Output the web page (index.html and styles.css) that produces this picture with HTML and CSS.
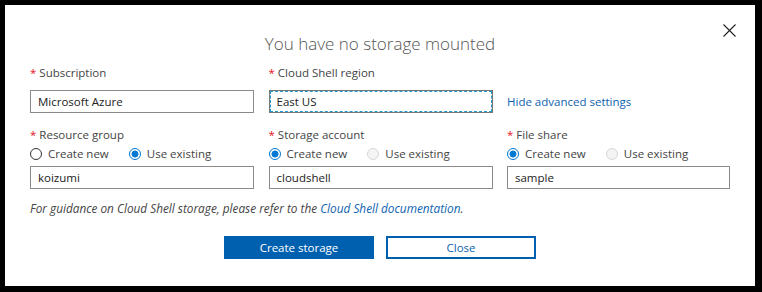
FILE: index.html
```html
<!DOCTYPE html>
<html lang="en">
<head>
    <meta charset="UTF-8">
    <meta name="viewport" content="width=device-width, initial-scale=1.0">
    <title>Cloud Shell storage</title>
    <link rel="stylesheet" href="styles.css">
</head>
<body>

    <div class="dialog">
        <!-- Close icon -->
        <button type="button" class="close-btn" aria-label="Close">
            <svg width="13" height="13" viewBox="0 0 13 13">
                <path d="M0.5 0.5 L12.5 12.5 M12.5 0.5 L0.5 12.5" stroke="#222" stroke-width="1.1" fill="none"/>
            </svg>
        </button>

        <h1 class="title">You have no storage mounted</h1>

        <div class="form-grid">
            <!-- Row 1 -->
            <div class="field">
                <label class="field-label"><span class="req">*</span> Subscription</label>
                <div class="text-box">Microsoft Azure</div>
            </div>
            <div class="field">
                <label class="field-label"><span class="req">*</span> Cloud Shell region</label>
                <div class="text-box focused">East US</div>
            </div>
            <div class="field link-cell">
                <a href="#" class="link">Hide advanced settings</a>
            </div>

            <!-- Row 2 -->
            <div class="field row-two">
                <label class="field-label"><span class="req">*</span> Resource group</label>
                <div class="radio-group">
                    <label class="radio"><span class="dot"></span>Create new</label>
                    <label class="radio"><span class="dot checked"></span>Use existing</label>
                </div>
                <div class="text-box">koizumi</div>
            </div>
            <div class="field row-two">
                <label class="field-label"><span class="req">*</span> Storage account</label>
                <div class="radio-group">
                    <label class="radio"><span class="dot checked"></span>Create new</label>
                    <label class="radio"><span class="dot disabled"></span>Use existing</label>
                </div>
                <div class="text-box">cloudshell</div>
            </div>
            <div class="field row-two">
                <label class="field-label"><span class="req">*</span> File share</label>
                <div class="radio-group">
                    <label class="radio"><span class="dot checked"></span>Create new</label>
                    <label class="radio"><span class="dot disabled"></span>Use existing</label>
                </div>
                <div class="text-box">sample</div>
            </div>
        </div>

        <p class="guidance">For guidance on Cloud Shell storage, please refer to the <a href="#" class="link">Cloud Shell documentation</a>.</p>

        <!-- Buttons -->
        <div class="button-group">
            <button type="button" class="btn btn-primary">Create storage</button>
            <button type="button" class="btn btn-outline">Close</button>
        </div>
    </div>

</body>
</html>
```

FILE: styles.css
```css
body {
    margin: 0;
    padding: 0;
    background-color: #000;
    font-family: "Segoe UI", "Open Sans", "Noto Sans", sans-serif;
    font-size: 12px;
    color: #333;
}

/* Dialog box */
.dialog {
    position: relative;
    box-sizing: border-box;
    width: 750px;
    height: 281px;
    margin: 5px 7px 6px 5px;
    background-color: #fff;
    padding: 28px 25px 0 25px;
}

.close-btn {
    position: absolute;
    top: 19px;
    right: 19px;
    padding: 0;
    border: none;
    background: none;
    line-height: 0;
    cursor: pointer;
}

.title {
    margin: 0;
    text-align: center;
    font-size: 17px;
    font-weight: 300;
    line-height: 22px;
    color: #555;
}

/* Form */
.form-grid {
    display: grid;
    grid-template-columns: 224px 224px 223px;
    column-gap: 14.5px;
    margin-top: 10px;
}

.field {
    display: flex;
    flex-direction: column;
}

.field-label {
    font-size: 11.5px;
    line-height: 16px;
    color: #444;
    margin-bottom: 9px;
}

.row-two .field-label {
    margin-bottom: 2px;
    margin-top: 14px;
}

.req {
    color: #e81123;
}

.text-box {
    box-sizing: border-box;
    height: 23px;
    border: 1px solid #8a8a8a;
    padding: 0 7px;
    font-size: 11.5px;
    line-height: 21px;
    color: #222;
}

.text-box.focused {
    outline: 1px dashed #1e9ad0;
    outline-offset: -2px;
    border-color: #777;
}

.link-cell {
    justify-content: flex-end;
    padding-bottom: 4px;
    box-sizing: border-box;
}

.link {
    color: #0f63b0;
    text-decoration: none;
    font-size: 11.5px;
}

/* Radios */
.radio-group {
    display: flex;
    height: 17px;
    align-items: center;
    margin-bottom: 4px;
}

.radio {
    display: flex;
    align-items: center;
    font-size: 11.5px;
    color: #444;
    margin-right: 20px;
}

.dot {
    box-sizing: border-box;
    width: 12px;
    height: 12px;
    border-radius: 50%;
    border: 1px solid #333;
    background: #fff;
    margin-right: 6px;
}

.dot.checked {
    border-color: #0078d4;
    background: radial-gradient(circle, #0078d4 0 3.2px, #fff 3.8px);
}

.dot.disabled {
    border-color: #d6d6d6;
    background: #f4f4f4;
}

/* Guidance */
.guidance {
    margin: 11px 0 0 0;
    font-style: italic;
    font-size: 11.8px;
    line-height: 16px;
    color: #444;
}

.guidance .link {
    font-size: 11.8px;
}

/* Button styling */
.button-group {
    display: flex;
    justify-content: center;
    gap: 12px;
    margin-top: 20px;
}

.btn {
    box-sizing: border-box;
    width: 150px;
    height: 23px;
    font-family: inherit;
    font-size: 11.5px;
    cursor: pointer;
    padding: 0;
}

.btn-primary {
    background-color: #0060b0;
    border: none;
    color: #fff;
}

.btn-outline {
    background-color: #fff;
    border: 2px solid #0060b0;
    color: #0f63b0;
}
```
